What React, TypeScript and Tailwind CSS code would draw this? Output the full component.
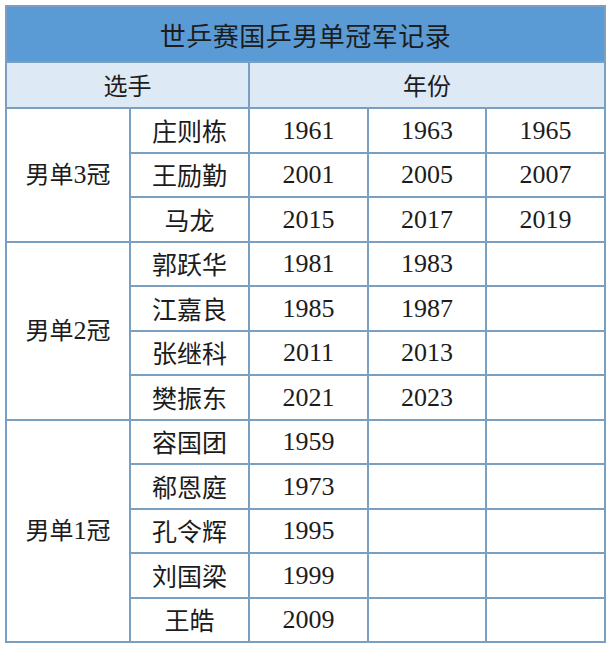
const groups = [
  {
    label: '男单3冠',
    players: [
      { name: '庄则栋', years: ['1961', '1963', '1965'] },
      { name: '王励勤', years: ['2001', '2005', '2007'] },
      { name: '马龙', years: ['2015', '2017', '2019'] },
    ],
  },
  {
    label: '男单2冠',
    players: [
      { name: '郭跃华', years: ['1981', '1983'] },
      { name: '江嘉良', years: ['1985', '1987'] },
      { name: '张继科', years: ['2011', '2013'] },
      { name: '樊振东', years: ['2021', '2023'] },
    ],
  },
  {
    label: '男单1冠',
    players: [
      { name: '容国团', years: ['1959'] },
      { name: '郗恩庭', years: ['1973'] },
      { name: '孔令辉', years: ['1995'] },
      { name: '刘国梁', years: ['1999'] },
      { name: '王皓', years: ['2009'] },
    ],
  },
]

const cjk = "font-['Noto_Sans_CJK_SC','Noto_Sans',sans-serif]"
const cell = 'border-2 border-[#7a9fc0] text-center p-0'

export default function App() {
  return (
    <div className="bg-white w-[614px] h-[647px] pl-[5px] pt-[5px]">
      <table className={`table-fixed border-collapse w-[599px] text-[#1c1c1c] ${cjk}`}>
        <colgroup>
          <col className="w-[124px]" />
          <col className="w-[119px]" />
          <col className="w-[119px]" />
          <col className="w-[118px]" />
          <col className="w-[119px]" />
        </colgroup>
        <thead>
          <tr className="h-[56px]">
            <th colSpan={5} className={`${cell} bg-[#5b9bd5] text-[26px] font-normal tracking-[0.5px]`}>
              世乒赛国乒男单冠军记录
            </th>
          </tr>
          <tr className="h-[46px]">
            <th colSpan={2} className={`${cell} bg-[#dde9f5] text-[24px] font-normal`}>选手</th>
            <th colSpan={3} className={`${cell} bg-[#dde9f5] text-[24px] font-normal`}>年份</th>
          </tr>
        </thead>
        <tbody>
          {groups.map((g) =>
            g.players.map((p, i) => (
              <tr key={p.name} className="h-[44.5px]">
                {i === 0 && (
                  <td rowSpan={g.players.length} className={`${cell} text-[24px]`}>
                    {g.label.slice(0, 2)}
                    <span className="font-['Liberation_Serif',serif] text-[26px]">{g.label.slice(2, 3)}</span>
                    {g.label.slice(3)}
                  </td>
                )}
                <td className={`${cell} text-[25px]`}>{p.name}</td>
                {[0, 1, 2].map((k) => (
                  <td key={k} className={`${cell} text-[26px] font-['Liberation_Serif',serif]`}>
                    {p.years[k] ?? ''}
                  </td>
                ))}
              </tr>
            ))
          )}
        </tbody>
      </table>
    </div>
  )
}
